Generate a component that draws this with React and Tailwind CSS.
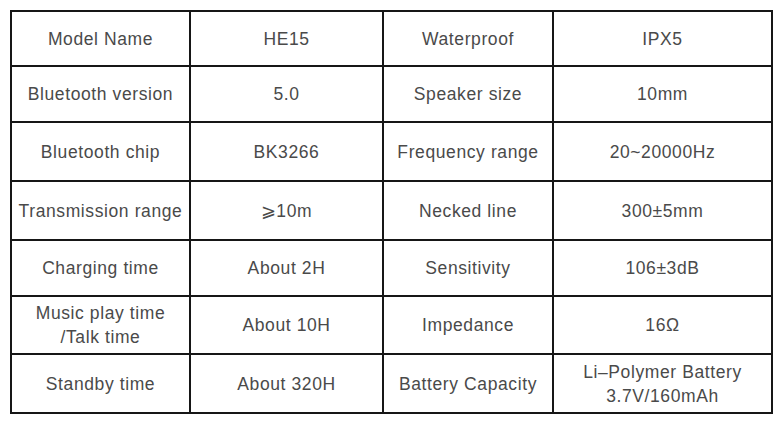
export default function App() {
  const rows = [
    ["Model Name", "HE15", "Waterproof", "IPX5"],
    ["Bluetooth version", "5.0", "Speaker size", "10mm"],
    ["Bluetooth chip", "BK3266", "Frequency range", "20~20000Hz"],
    ["Transmission range", "⩾10m", "Necked line", "300±5mm"],
    ["Charging time", "About 2H", "Sensitivity", "106±3dB"],
    [["Music play time", "/Talk time"], "About 10H", "Impedance", "16Ω"],
    ["Standby time", "About 320H", "Battery Capacity", ["Li–Polymer Battery", "3.7V/160mAh"]],
  ];
  const heights = ["h-[53px]", "h-[54px]", "h-[57px]", "h-[57px]", "h-[54px]", "h-[56px]", "h-[57px]"];
  return (
    <div className="w-[781px] h-[422px] bg-white pt-[10px] pl-[10px]" style={{ fontFamily: '"Liberation Sans", Arial, sans-serif' }}>
      <div className="grid grid-cols-[177px_191px_168px_217px] gap-[2px] bg-[#161616] p-[2px] w-[763px]">
        {rows.map((r, i) =>
          r.map((c, j) => (
            <div
              key={i + "-" + j}
              className={`${heights[i]} bg-white flex flex-col items-center justify-center text-center text-[17.5px] leading-[24px] text-[#4a4a4a] tracking-[0.6px]`}
            >
              {Array.isArray(c) ? c.map((t) => <span key={t}>{t}</span>) : <span>{c}</span>}
            </div>
          ))
        )}
      </div>
    </div>
  );
}
